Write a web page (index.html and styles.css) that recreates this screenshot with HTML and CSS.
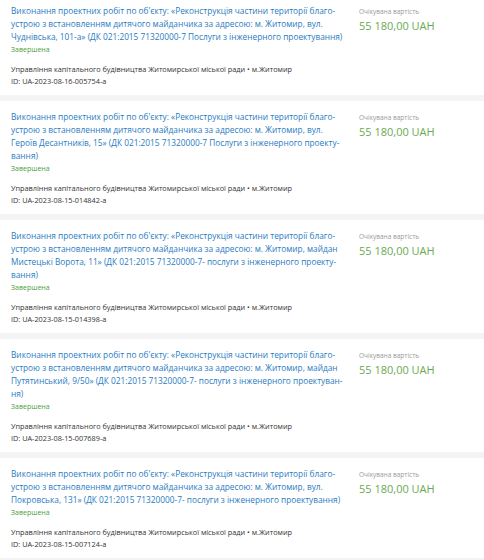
FILE: index.html
```html
<!DOCTYPE html>
<html lang="uk">
<head>
<meta charset="utf-8">
<link rel="stylesheet" href="styles.css">
</head>
<body>
<div class="list">
  <div class="card first">
    <div class="main">
      <a class="title" href="#">Виконання проектних робіт по об'єкту: «Реконструкція частини території благо&shy;устрою з встановленням дитячого майданчика за адресою: м. Житомир, вул. Чуднівська, 101-а» (ДК 021:2015 71320000-7 Послуги з інженерного проектування)</a>
      <div class="status">Завершена</div>
      <div class="org">Управління капітального будівництва Житомирської міської ради • м.Житомир</div>
      <div class="id">ID: UA-2023-08-16-005754-a</div>
    </div>
    <div class="side">
      <div class="label">Очікувана вартість</div>
      <div class="price">55 180,00 UAH</div>
    </div>
  </div>
  <div class="card">
    <div class="main">
      <a class="title" href="#">Виконання проектних робіт по об'єкту: «Реконструкція частини території благо&shy;устрою з встановленням дитячого майданчика за адресою: м. Житомир, вул. Героїв Десантників, 15» (ДК 021:2015 71320000-7 Послуги з інженерного проекту&shy;вання)</a>
      <div class="status">Завершена</div>
      <div class="org">Управління капітального будівництва Житомирської міської ради • м.Житомир</div>
      <div class="id">ID: UA-2023-08-15-014842-a</div>
    </div>
    <div class="side">
      <div class="label">Очікувана вартість</div>
      <div class="price">55 180,00 UAH</div>
    </div>
  </div>
  <div class="card">
    <div class="main">
      <a class="title" href="#">Виконання проектних робіт по об'єкту: «Реконструкція частини території благо&shy;устрою з встановленням дитячого майданчика за адресою: м. Житомир, майдан Мистецькі Ворота, 11» (ДК 021:2015 71320000-7- послуги з інженерного проекту&shy;вання)</a>
      <div class="status">Завершена</div>
      <div class="org">Управління капітального будівництва Житомирської міської ради • м.Житомир</div>
      <div class="id">ID: UA-2023-08-15-014398-a</div>
    </div>
    <div class="side">
      <div class="label">Очікувана вартість</div>
      <div class="price">55 180,00 UAH</div>
    </div>
  </div>
  <div class="card">
    <div class="main">
      <a class="title" href="#">Виконання проектних робіт по об'єкту: «Реконструкція частини території благо&shy;устрою з встановленням дитячого майданчика за адресою: м. Житомир, майдан Путятинський, 9/50» (ДК 021:2015 71320000-7- послуги з інженерного проектуван&shy;ня)</a>
      <div class="status">Завершена</div>
      <div class="org">Управління капітального будівництва Житомирської міської ради • м.Житомир</div>
      <div class="id">ID: UA-2023-08-15-007689-a</div>
    </div>
    <div class="side">
      <div class="label">Очікувана вартість</div>
      <div class="price">55 180,00 UAH</div>
    </div>
  </div>
  <div class="card">
    <div class="main">
      <a class="title" href="#">Виконання проектних робіт по об'єкту: «Реконструкція частини території благо&shy;устрою з встановленням дитячого майданчика за адресою: м. Житомир, вул. Покровська, 131» (ДК 021:2015 71320000-7- послуги з інженерного проектування)</a>
      <div class="status">Завершена</div>
      <div class="org">Управління капітального будівництва Житомирської міської ради • м.Житомир</div>
      <div class="id">ID: UA-2023-08-15-007124-a</div>
    </div>
    <div class="side">
      <div class="label">Очікувана вартість</div>
      <div class="price">55 180,00 UAH</div>
    </div>
  </div>
</div>
</body>
</html>
```
FILE: styles.css
```css
html, body {
  margin: 0;
  padding: 0;
  background: #f4f4f4;
}
body {
  font-family: "Open Sans", "Noto Sans", sans-serif;
  color: #333;
}
.list {
  display: flex;
  flex-direction: column;
  gap: 6px;
}
.card {
  background: #fff;
  display: flex;
  padding: 8.5px 0 8.5px 11px;
}
.card.first {
  margin-top: -5px;
}
.main {
  flex: 0 0 333.5px;
  display: flex;
  flex-direction: column;
}
.title {
  color: #2a7bc2;
  text-decoration: none;
  font-size: 8.3px;
  line-height: 13px;
}
.status {
  color: #4c9e3c;
  font-size: 7px;
  line-height: 10px;
  margin-top: 2px;
}
.org {
  font-size: 7.3px;
  line-height: 12px;
  margin-top: 8px;
}
.id {
  font-size: 7.3px;
  line-height: 12px;
}
.side {
  margin-left: 14.5px;
  display: flex;
  flex-direction: column;
}
.label {
  color: #999;
  font-size: 6.5px;
  line-height: 10px;
  margin-top: 3px;
}
.price {
  color: #6aaa52;
  font-size: 11px;
  line-height: 16px;
  margin-top: 1px;
}
```
